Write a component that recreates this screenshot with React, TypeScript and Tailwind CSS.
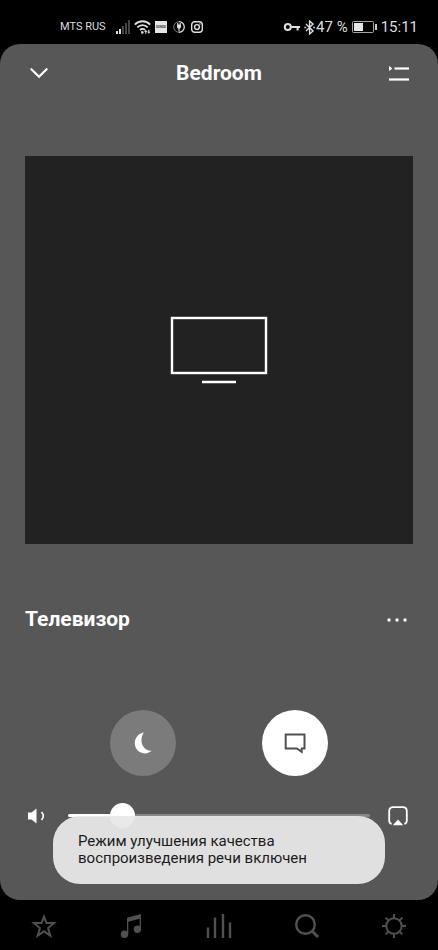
import { useState } from "react";
import type { ReactNode } from "react";

function StatusBar() {
  return (
    <div className="flex h-11 items-center justify-between pt-2.5 pr-5 pl-15 text-[#dedede]">
      <div className="flex items-center">
        <span className="w-14 text-[11px] whitespace-nowrap">MTS RUS</span>
        <svg width="14" height="14" viewBox="0 0 14 14" fill="currentColor" aria-hidden="true">
          <rect x="0" y="11" width="2" height="3" />
          <rect x="3" y="9" width="2" height="5" />
          <rect x="6" y="6" width="2" height="8" opacity="0.3" />
          <rect x="9" y="3" width="2" height="11" opacity="0.3" />
          <rect x="12" y="0" width="2" height="14" opacity="0.3" />
        </svg>
        <svg className="ml-1" width="17" height="14" viewBox="0 0 17 14" fill="none" stroke="currentColor" strokeWidth="1.9" aria-hidden="true">
          <path d="M.8 4.6C5.1.1 11.9.1 16.2 4.6M3.3 7.4c3-3.1 7.4-3.1 10.4 0M6 10c1.5-1.5 3.5-1.5 5 0" />
          <circle cx="8.3" cy="12.4" r="1.3" fill="currentColor" stroke="none" />
          <path d="M11.8 10.5v3.2M14.8 9.8v3" strokeWidth="1.1" />
          <path d="M10.2 12l1.6-2 1.6 2zM13.2 11.8l1.6 2 1.6-2z" fill="currentColor" stroke="none" />
        </svg>
        <svg className="ml-1" width="12" height="12" viewBox="0 0 12 12" aria-hidden="true">
          <rect width="12" height="12" fill="#e6e6e6" />
          <text x="6" y="7" textAnchor="middle" fontSize="3" fontWeight="700" fill="#333">
            SONOS
          </text>
        </svg>
        <svg className="ml-1.5" width="12" height="12" viewBox="0 0 12 12" fill="none" stroke="currentColor" aria-hidden="true">
          <path d="M6 .7A5.3 5.3 0 0 1 6 11.3" strokeWidth="1.3" />
          <path d="M6 .7A5.3 5.3 0 0 0 6 11.3" strokeWidth="1" opacity="0.55" />
          <path d="M4 3.5h4v2.2a2 2 0 0 1-4 0z" fill="currentColor" stroke="none" />
          <path d="M6 7v3.5M4.8 2v2M7.2 2v2" strokeWidth="1.1" />
        </svg>
        <svg className="ml-1.5" width="12" height="12" viewBox="0 0 12 12" fill="none" stroke="currentColor" strokeWidth="1.4" aria-hidden="true">
          <rect x=".7" y=".7" width="10.6" height="10.6" rx="3" />
          <circle cx="6" cy="6" r="2.4" />
          <circle cx="9" cy="3" r=".7" fill="currentColor" stroke="none" />
        </svg>
      </div>

      <div className="flex items-center">
        <svg width="17" height="10" viewBox="0 0 17 10" fill="none" stroke="currentColor" strokeWidth="2" aria-hidden="true">
          <circle cx="4.8" cy="5" r="3" />
          <path d="M7.8 5H17M14.6 5v3.6" />
        </svg>
        <svg className="ml-1" width="12" height="15" viewBox="0 0 12 15" fill="none" stroke="currentColor" strokeWidth="1.4" aria-hidden="true">
          <path d="M2 4l7 7-3.4 3V1L9 4l-7 7" />
          <path d="M.4 7.5h1.7M9.2 7.5h1.7" strokeWidth="1.6" />
        </svg>
        <span className="text-[15px]">47 %</span>
        <svg className="ml-1" width="25" height="12" viewBox="0 0 25 12" aria-hidden="true">
          <rect x=".5" y=".5" width="21" height="11" rx="1" fill="none" stroke="#a5a5a5" />
          <rect x="2" y="2" width="9" height="8" fill="#e6e6e6" />
          <rect x="23" y="3" width="2" height="6" fill="#c8c8c8" />
        </svg>
        <span className="ml-1 text-[15px]">15:11</span>
      </div>
    </div>
  );
}

function VolumeRow() {
  const [volume, setVolume] = useState(15);
  // the thumb is 25px wide, so the filled part ends at its centre
  const fill = `calc(12px + (100% - 25px) * ${volume / 100})`;

  return (
    <div className="flex items-center">
      <svg className="shrink-0" width="18" height="16" viewBox="0 0 18 16" fill="none" aria-hidden="true">
        <path d="M0 4.5h3.5L8.5.5v15l-5-4H0z" fill="#fff" />
        <path d="M13.5 4q3.6 4 0 8" stroke="#fff" strokeWidth="1.6" />
      </svg>
      <div className="relative ml-[22px] flex h-[25px] flex-1 items-center">
        <div className="h-[3px] w-full overflow-hidden rounded-full bg-[#898687]">
          <div className="h-full bg-white" style={{ width: fill }} />
        </div>
        <input
          type="range"
          aria-label="Громкость"
          value={volume}
          onChange={(e) => setVolume(Number(e.target.value))}
          className="absolute inset-0 h-full w-full appearance-none bg-transparent [&::-webkit-slider-thumb]:size-[25px] [&::-webkit-slider-thumb]:appearance-none [&::-webkit-slider-thumb]:rounded-full [&::-webkit-slider-thumb]:bg-white"
        />
      </div>
      <button type="button" aria-label="AirPlay" className="ml-[18px] shrink-0">
        <svg width="20" height="20" viewBox="0 0 20 20" fill="none">
          <path d="M3.6 17.8Q1.2 17.3 1.2 14.5V5.2q0-4 4-4h9.6q4 0 4 4v9.3q0 2.8-2.4 3.3" stroke="#fff" strokeWidth="1.8" />
          <path d="M10 13.6l5.2 5.6H4.8z" fill="#fff" />
        </svg>
      </button>
    </div>
  );
}

function NavItem({ label, children }: { label: string; children: ReactNode }) {
  return (
    <a href="#" aria-label={label} className="flex items-center justify-center">
      <svg width="26" height="26" viewBox="0 0 26 26" fill="none" stroke="#505050" strokeWidth="2">
        {children}
      </svg>
    </a>
  );
}

function BottomNav() {
  return (
    <nav className="grid h-[50px] grid-cols-5 pt-0.5">
      <NavItem label="Избранное">
        <path d="M13 3.6l2.5 6.4h7.6l-6 5 2.2 7.8L13 18.2l-6.3 4.6L8.9 15l-6-5h7.6z" strokeWidth="2" />
      </NavItem>
      <NavItem label="Музыка">
        <g fill="#505050" stroke="none">
          <path d="M9 4.7L23 1v15.5h-1.3V5.7L10.3 8.7V21H9z" />
          <circle cx="6.5" cy="21.3" r="3.7" />
          <circle cx="19.4" cy="16.3" r="3.7" />
        </g>
      </NavItem>
      <NavItem label="Комнаты">
        <path d="M2 14.5V25M9 4.5V25M17 1v24M24 9.5V25" strokeWidth="2.4" />
      </NavItem>
      <NavItem label="Поиск">
        <circle cx="11.5" cy="11.5" r="9.3" strokeWidth="2.4" />
        <path d="M18 18l6 6" strokeWidth="3" />
      </NavItem>
      <NavItem label="Настройки">
        <circle cx="13" cy="13" r="7.7" />
        <path d="M13 1v4M13 21v4M1 13h4M21 13h4M4.6 4.6l2.8 2.8M18.6 18.6l2.8 2.8M4.6 21.4l2.8-2.8M18.6 7.4l2.8-2.8" />
      </NavItem>
    </nav>
  );
}

export default function App() {
  return (
    <div className="flex min-h-screen flex-col bg-black font-[Roboto,'Noto_Sans',sans-serif] text-white">
      <StatusBar />

      <main className="relative flex flex-1 flex-col rounded-[20px] bg-[#575757] px-[25px]">
        <header className="flex h-[59px] items-center justify-between px-1">
          <button type="button" aria-label="Свернуть" className="flex w-5 justify-center">
            <svg width="18" height="11" viewBox="0 0 18 11" fill="none" stroke="#fff" strokeWidth="2.2">
              <path d="M1.4 1.2L9 8.8l7.6-7.6" strokeLinecap="round" />
            </svg>
          </button>
          <h1 className="text-[21px] font-bold">Bedroom</h1>
          <button type="button" aria-label="Очередь" className="w-5">
            <svg width="20" height="16" viewBox="0 0 20 16" fill="#fff">
              <path d="M0 0l3.4 2.4L0 5z" />
              <rect x="5.5" y="1.4" width="14.5" height="2.2" />
              <rect x="0" y="12.4" width="20" height="2.2" />
            </svg>
          </button>
        </header>

        <div className="mt-[53px] flex aspect-square items-center justify-center bg-[#222]">
          <svg width="98" height="68" viewBox="0 0 98 68" fill="none" stroke="#fff" strokeWidth="2.4" aria-hidden="true">
            <rect x="2" y="2" width="94" height="55" />
            <path d="M32 66h34" />
          </svg>
        </div>

        <div className="mt-[60px] flex h-8 items-center justify-between">
          <h2 className="text-[21px] font-bold">Телевизор</h2>
          <button type="button" aria-label="Ещё" className="mr-1.5">
            <svg width="20" height="6" viewBox="0 0 20 6" fill="#fff">
              <circle cx="2" cy="3" r="1.7" />
              <circle cx="10" cy="3" r="1.7" />
              <circle cx="18" cy="3" r="1.7" />
            </svg>
          </button>
        </div>

        <div className="mt-[74px] flex justify-center gap-[86px]">
          <button
            type="button"
            aria-label="Ночной режим"
            aria-pressed="false"
            className="flex size-[66px] items-center justify-center rounded-full bg-[#7b7b7b]"
          >
            <svg width="22" height="22" viewBox="0 0 22 22" fill="#fff">
              <path d="M11.8.4C6.6 1.4 2.8 5.6 2.8 11c0 6 4.6 10.4 10.2 10.4 2.8 0 5-.9 6.6-2.8C12.4 19.4 5.8 10 11.8.4z" />
            </svg>
          </button>
          <button
            type="button"
            aria-label="Улучшение речи"
            aria-pressed="true"
            className="flex size-[66px] items-center justify-center rounded-full bg-white"
          >
            <svg width="22" height="22" viewBox="0 0 22 22" fill="none" stroke="#505050" strokeWidth="2">
              <path d="M1.7 2.4h18.8v14h-2.8v3.4l-4.8-3.4H1.7z" />
            </svg>
          </button>
        </div>

        <div className="mt-[27px] mb-[71px] pr-[5px] pl-[3px]">
          <VolumeRow />
        </div>

        <div
          role="status"
          className="absolute inset-x-[53px] bottom-4 rounded-[27px] bg-[#e8e8e8]/95 px-[25px] py-[17px] text-[15px] leading-[17px] text-[#1c1c1c]"
        >
          Режим улучшения качества воспроизведения речи включен
        </div>
      </main>

      <BottomNav />
    </div>
  );
}
